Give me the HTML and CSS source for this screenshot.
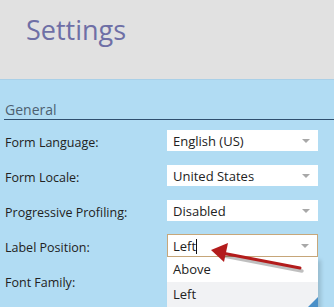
FILE: index.html
```html
<!DOCTYPE html>
<html lang="en">
<head>
    <meta charset="UTF-8">
    <title>Settings</title>
    <link rel="stylesheet" href="styles.css">
</head>
<body>
    <div class="header">
        <h1>Settings</h1>
    </div>
    <div class="panel">
        <div class="section-title">General</div>
        <div class="form">
            <div class="row">
                <label>Form Language:</label>
                <div class="select"><span>English (US)</span><i class="caret"></i></div>
            </div>
            <div class="row">
                <label>Form Locale:</label>
                <div class="select"><span>United States</span><i class="caret"></i></div>
            </div>
            <div class="row">
                <label>Progressive Profiling:</label>
                <div class="select"><span>Disabled</span><i class="caret"></i></div>
            </div>
            <div class="row">
                <label>Label Position:</label>
                <div class="select open"><span>Left<b class="text-cursor"></b></span><i class="caret"></i>
                    <ul class="dropdown">
                        <li>Above</li>
                        <li class="hover">Left</li>
                    </ul>
                </div>
            </div>
            <div class="row">
                <label>Font Family:</label>
            </div>
        </div>
    </div>

    <!-- annotation arrow -->
    <svg class="arrow" width="334" height="307" viewBox="0 0 334 307">
        <line x1="302" y1="271" x2="224" y2="256" stroke="rgba(0,0,0,0.25)" stroke-width="3.5" stroke-linecap="round"/>
        <line x1="300" y1="268" x2="222" y2="253" stroke="#b31c1c" stroke-width="3" stroke-linecap="round"/>
        <polygon points="211,250 228,243 224,262" fill="#b31c1c"/>
    </svg>
</body>
</html>
```

FILE: styles.css
```css
body {
    margin: 0;
    font-family: "Open Sans", Arial, sans-serif;
    background-color: #b1dcf3;
    color: #222;
    width: 334px;
    height: 307px;
    overflow: hidden;
}

.header {
    height: 80px;
    background-color: #e1e1e1;
    padding-left: 26px;
    box-sizing: border-box;
    border-bottom: 1px solid #a9d0e8;
}

.header h1 {
    margin: 0;
    padding-top: 12px;
    font-size: 27px;
    font-weight: 400;
    line-height: 36px;
    color: #6e6fa6;
}

.panel {
    background-color: #b1dcf3;
}

.section-title {
    margin-left: 4px;
    padding: 20px 0 0 1px;
    font-size: 14px;
    line-height: 19px;
    color: #4d5f70;
    border-bottom: 1px solid #2f4f6e;
}

.form {
    padding-top: 3px;
}

.row {
    display: flex;
    align-items: center;
    height: 35px;
}

.row label {
    width: 167px;
    padding: 3px 0 0 5px;
    box-sizing: border-box;
    font-size: 12.5px;
    color: #222;
}

.select {
    position: relative;
    width: 151px;
    height: 21px;
    background-color: #fff;
    box-sizing: border-box;
    display: flex;
    align-items: center;
    padding-left: 6px;
    font-size: 13px;
    color: #222;
}

.select.open {
    height: 23px;
    border: 1px solid #c7a77a;
    padding-left: 5px;
}

.caret {
    position: absolute;
    right: 8px;
    top: 50%;
    margin-top: -2px;
    width: 0;
    height: 0;
    border-left: 4px solid transparent;
    border-right: 4px solid transparent;
    border-top: 4px solid #a8a8a8;
}

.text-cursor {
    display: inline-block;
    width: 1px;
    height: 15px;
    background-color: #111;
    vertical-align: -3px;
}

.dropdown {
    position: absolute;
    top: 22px;
    left: -1px;
    width: 151px;
    margin: 0;
    padding: 0;
    list-style: none;
    background-color: #fff;
    box-shadow: 3px 3px 4px rgba(0,0,0,0.15);
}

.dropdown li {
    height: 25px;
    line-height: 25px;
    padding-left: 6px;
    font-size: 13px;
    color: #222;
}

.dropdown li.hover {
    background-color: #f1f2f4;
}

.dropdown::after {
    content: "";
    position: absolute;
    right: 0;
    bottom: 0;
    width: 0;
    height: 0;
    border-left: 10px solid transparent;
    border-bottom: 10px solid #4a90c8;
}

.arrow {
    position: absolute;
    left: 0;
    top: 0;
    pointer-events: none;
}
```
